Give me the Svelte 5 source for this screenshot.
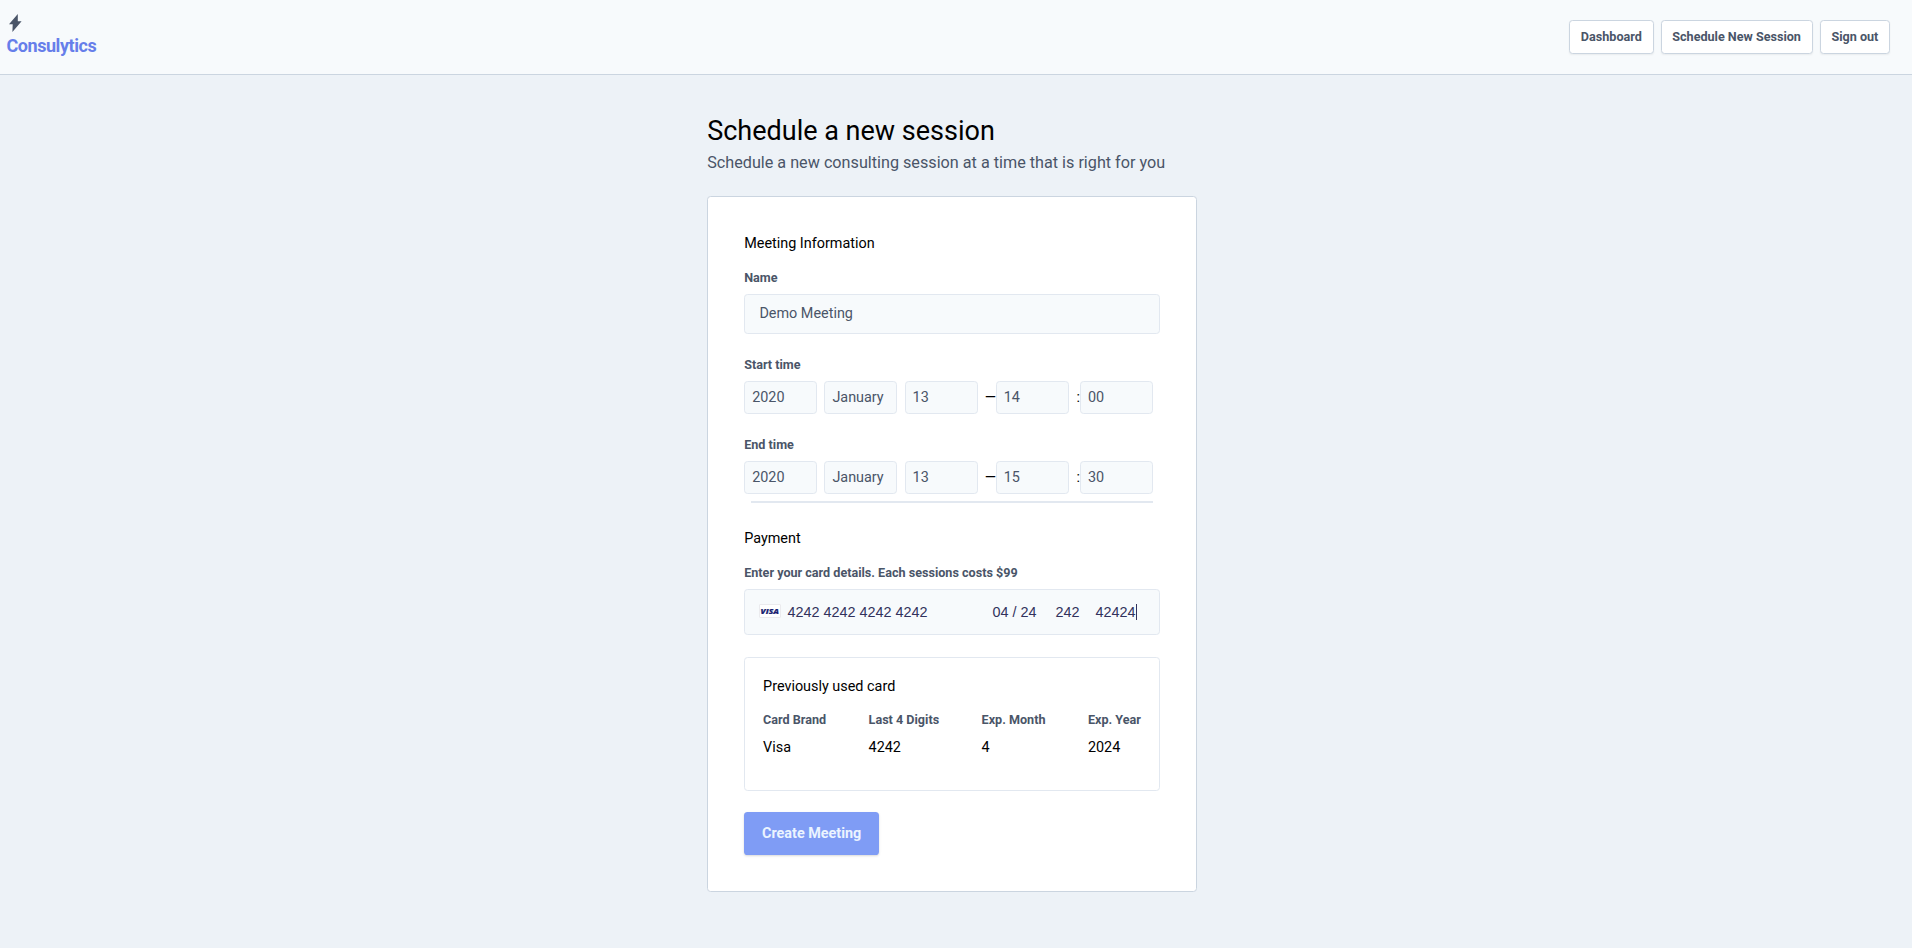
<script>
  const nav = ['Dashboard', 'Schedule New Session', 'Sign out'];
  const times = [
    { label: 'Start time', date: ['2020', 'January', '13'], hour: '14', minute: '00' },
    { label: 'End time', date: ['2020', 'January', '13'], hour: '15', minute: '30' }
  ];
  const card = [
    ['Card Brand', 'Visa'],
    ['Last 4 Digits', '4242'],
    ['Exp. Month', '4'],
    ['Exp. Year', '2024']
  ];
</script>

<div class="page">
  <header>
    <a class="brand" href="#home">
      <svg class="bolt" width="13" height="18" viewBox="0 0 13 18" aria-hidden="true">
        <path d="M8.8 0 0 10.2h3.7L3.4 18 12.6 7.3H8.8z" fill="#4a5568" />
      </svg>
      <span>Consulytics</span>
    </a>
    <nav>
      {#each nav as item}<button class="nav-btn">{item}</button>{/each}
    </nav>
  </header>

  <main>
    <h1>Schedule a new session</h1>
    <p class="sub">Schedule a new consulting session at a time that is right for you</p>

    <form class="panel">
      <h2>Meeting Information</h2>
      <div class="label">Name</div>
      <div class="input">Demo Meeting</div>

      {#each times as t}
        <div class="label time-label">{t.label}</div>
        <div class="time-row">
          {#each t.date as part}<div class="select">{part}</div>{/each}
          <span class="dash">—</span>
          <div class="select">{t.hour}</div>
          <span class="colon">:</span>
          <div class="select">{t.minute}</div>
        </div>
      {/each}
      <div class="rule"></div>

      <h2>Payment</h2>
      <div class="label">Enter your card details. Each sessions costs $99</div>
      <div class="card-input">
        <svg class="visa" width="22" height="14" viewBox="0 0 22 14">
          <rect x="0.5" y="0.5" width="21" height="13" rx="0.5" fill="#fff" stroke="#ebebee" />
          <text x="1.6" y="9.6" textLength="18.4" lengthAdjust="spacingAndGlyphs">VISA</text>
        </svg>
        <span class="number">4242 4242 4242 4242</span>
        <span class="expiry">04 / 24</span>
        <span class="cvc">242</span>
        <span class="zip">42424</span>
        <span class="caret"></span>
      </div>

      <section class="previous">
        <h2>Previously used card</h2>
        <div class="details">
          {#each card as [name, value]}
            <div><div class="label">{name}</div><div class="value">{value}</div></div>
          {/each}
        </div>
      </section>

      <button class="submit" type="button">Create Meeting</button>
    </form>
  </main>
</div>

<style>
  :global(html) { font-size: 14.4px; }
  :global(body) { margin: 0; background: #edf2f7; }
  * { box-sizing: border-box; }
  .page {
    min-height: 948px;
    font-family: Roboto, sans-serif;
    font-size: 1rem;
    line-height: 1.5;
    color: #000;
    background: #edf2f7;
  }
  header {
    height: 75px;
    display: flex;
    justify-content: space-between;
    align-items: flex-start;
    padding: 14px 22px 0 6.5px;
    background: #f7fafc;
    border-bottom: 1px solid #cbd5e0;
  }
  .brand {
    display: flex;
    flex-direction: column;
    color: #667eea;
    font-size: 18px;
    font-weight: 700;
    line-height: 27px;
    letter-spacing: -0.025em;
    text-decoration: none;
  }
  .bolt { display: block; margin-left: 2.2px; }
  nav { display: flex; gap: 7.1px; padding-top: 6px; }
  button { font-family: inherit; margin: 0; }
  .nav-btn {
    height: 34px;
    padding: 0 10.7px 2px;
    font-size: 12.6px;
    font-weight: 700;
    color: #4a5568;
    background: #fff;
    border: 1px solid #cbd5e0;
    border-radius: 3.6px;
    box-shadow: 0 1px 2px rgba(0, 0, 0, 0.06);
  }
  main { width: 489.6px; margin-left: 707.2px; padding-top: 36px; }
  h1 { margin: 0; font-size: 27px; font-weight: 400; line-height: 40.5px; }
  .sub { margin: -1px 0 21.6px; font-size: 16.2px; line-height: 24.3px; color: #4a5568; }
  .panel {
    height: 696px;
    padding: 36px 36px 0;
    background: #fff;
    border: 1px solid #cbd5e0;
    border-radius: 3.6px;
  }
  h2 { margin: 0; font-size: 14.4px; font-weight: 400; line-height: 21.6px; }
  .label {
    margin-top: 13.4px;
    font-size: 12.6px;
    font-weight: 700;
    line-height: 19px;
    color: #4a5568;
  }
  .input, .select, .card-input {
    background: #f7fafc;
    border: 1px solid #e2e8f0;
    border-radius: 3.6px;
    color: #4a5568;
  }
  .input { height: 40px; margin-top: 7px; padding: 0 14.2px; line-height: 37px; }
  .time-label { margin-top: 20.6px; }
  .time-row { display: flex; margin-top: 7px; }
  .select { width: 73px; height: 33px; padding: 0 7px; line-height: 31px; margin-right: 7.2px; }
  .select:last-child { margin-right: 0; }
  .dash, .colon { line-height: 33px; text-align: right; }
  .dash { width: 11px; }
  .colon { width: 4px; }
  .rule { height: 2px; margin: 7px 7px 25px; background: #e2e8f0; }
  .card-input {
    display: flex;
    align-items: center;
    height: 46px;
    margin-top: 7px;
    padding: 1px 21px 0 14px;
    font-family: "Liberation Sans", Arial, sans-serif;
    font-size: 14.4px;
    color: #32325d;
  }
  .visa { flex: none; margin-top: -3px; }
  .visa text {
    font: italic 800 7.2px "Open Sans", sans-serif;
    fill: #1a1f71;
    stroke: #1a1f71;
    stroke-width: 0.2px;
  }
  .number { width: 205px; margin-left: 6.4px; }
  .expiry { width: 63px; }
  .cvc { width: 40px; }
  .caret { width: 1px; height: 16px; margin-left: 0.4px; background: #32325d; }
  .number, .expiry, .cvc, .zip { line-height: 22px; padding-bottom: 1px; }
  .number, .expiry, .cvc, .zip, .caret { flex: none; white-space: nowrap; }
  .previous {
    height: 134px;
    margin-top: 22px;
    padding: 18.5px 17.9px 0;
    border: 1px solid #e2e8f0;
    border-radius: 3.6px;
  }
  .details { display: flex; justify-content: space-between; }
  .details .label { margin-top: 12.6px; }
  .value { margin-top: 7.6px; line-height: 21.6px; }
  .submit {
    height: 43px;
    margin-top: 21px;
    padding: 0 17.8px;
    font-size: 14.4px;
    font-weight: 700;
    color: #ebf4ff;
    background: #7f9cf5;
    border: 0;
    border-radius: 3.6px;
    box-shadow: 0 1px 3px rgba(0, 0, 0, 0.1), 0 1px 2px rgba(0, 0, 0, 0.06);
  }
</style>
